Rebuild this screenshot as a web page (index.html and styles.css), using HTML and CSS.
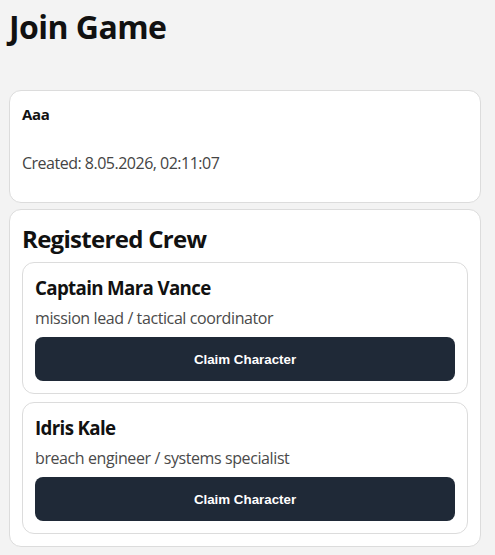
FILE: index.html
```html
<!DOCTYPE html>
<html lang="en">
<head>
<meta charset="utf-8">
<title>Join Game</title>
<link rel="stylesheet" href="styles.css">
</head>
<body>
<main class="page">
  <h1 class="page-title">Join Game</h1>

  <section class="card game-card">
    <div class="game-name">Aaa</div>
    <p class="game-meta">Created: 8.05.2026, 02:11:07</p>
  </section>

  <section class="card crew-card">
    <h2 class="crew-title">Registered Crew</h2>
    <div class="crew-list">
      <article class="card member">
        <h3 class="member-name">Captain Mara Vance</h3>
        <p class="member-role">mission lead / tactical coordinator</p>
        <button class="claim-btn" type="button">Claim Character</button>
      </article>
      <article class="card member">
        <h3 class="member-name">Idris Kale</h3>
        <p class="member-role">breach engineer / systems specialist</p>
        <button class="claim-btn" type="button">Claim Character</button>
      </article>
    </div>
  </section>
</main>
</body>
</html>
```

FILE: styles.css
```css
* {
  box-sizing: border-box;
}

html,
body {
  margin: 0;
  background: #f3f3f3;
}

body {
  font-family: "Open Sans", "Noto Sans", sans-serif;
  color: #111;
}

.page {
  width: 481px;
  padding: 7px 0 0 9px;
  display: flex;
  flex-direction: column;
}

.page-title {
  margin: 0 0 43px 0;
  font-size: 32px;
  line-height: 40px;
  font-weight: 700;
  letter-spacing: -0.55px;
  color: #111;
}

.card {
  background: #fff;
  border: 1px solid #dcdcdc;
  border-radius: 12px;
  padding: 12px;
}

.game-card {
  margin-bottom: 6px;
}

.game-name {
  padding-top: 1px;
  font-size: 15px;
  line-height: 20px;
  font-weight: 700;
  letter-spacing: -0.3px;
}

.game-meta {
  margin: 28px 0 16px;
  font-size: 16px;
  line-height: 22px;
  letter-spacing: -0.5px;
  color: #444;
}

.crew-title {
  margin: 2px 0 8px;
  font-size: 24px;
  line-height: 30px;
  font-weight: 700;
  letter-spacing: -0.7px;
}

.crew-list {
  display: flex;
  flex-direction: column;
  gap: 8px;
}

.member-name {
  margin: 1px 0 7px;
  font-size: 18.72px;
  line-height: 24px;
  font-weight: 700;
  letter-spacing: -0.65px;
}

.member-role {
  margin: 0 0 8px;
  font-size: 16px;
  line-height: 22px;
  letter-spacing: -0.4px;
  color: #4a4a4a;
}

.claim-btn {
  display: block;
  width: 100%;
  height: 44px;
  border: 0;
  border-radius: 8px;
  background: #1f2937;
  color: #fff;
  font-family: "Liberation Sans", Arial, sans-serif;
  font-size: 13.33px;
  font-weight: 700;
  cursor: pointer;
}
```
